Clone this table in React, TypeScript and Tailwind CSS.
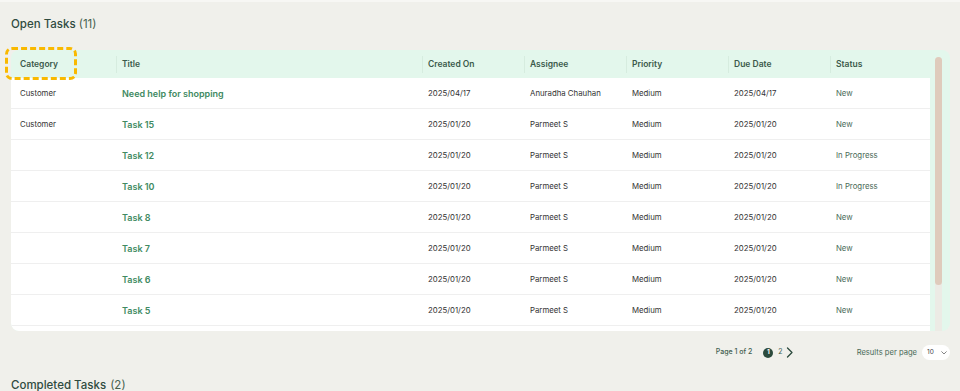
import React from "react";

const rows = [
  { cat: "Customer", title: "Need help for shopping", created: "2025/04/17", assignee: "Anuradha Chauhan", priority: "Medium", due: "2025/04/17", status: "New" },
  { cat: "Customer", title: "Task 15", created: "2025/01/20", assignee: "Parmeet S", priority: "Medium", due: "2025/01/20", status: "New" },
  { cat: "", title: "Task 12", created: "2025/01/20", assignee: "Parmeet S", priority: "Medium", due: "2025/01/20", status: "In Progress" },
  { cat: "", title: "Task 10", created: "2025/01/20", assignee: "Parmeet S", priority: "Medium", due: "2025/01/20", status: "In Progress" },
  { cat: "", title: "Task 8", created: "2025/01/20", assignee: "Parmeet S", priority: "Medium", due: "2025/01/20", status: "New" },
  { cat: "", title: "Task 7", created: "2025/01/20", assignee: "Parmeet S", priority: "Medium", due: "2025/01/20", status: "New" },
  { cat: "", title: "Task 6", created: "2025/01/20", assignee: "Parmeet S", priority: "Medium", due: "2025/01/20", status: "New" },
  { cat: "", title: "Task 5", created: "2025/01/20", assignee: "Parmeet S", priority: "Medium", due: "2025/01/20", status: "New" },
];

const grid = "grid grid-cols-[105px_306px_102px_102px_102px_102px_1fr]";

function HeadCell({ children, first, divider }: { children: React.ReactNode; first?: boolean; divider?: boolean }) {
  return (
    <div className={`relative flex items-center h-full ${first ? "pl-[9px]" : "pl-[6px]"}`}>
      {divider && <span className="absolute left-0 top-[5px] bottom-[5px] w-px bg-[#d6ecdf]" />}
      {children}
    </div>
  );
}

export default function App() {
  return (
    <div
      className="w-[960px] h-[391px] overflow-hidden bg-[#f0f0eb] border-t-2 border-[#f7f7f4] text-[#333]"
      style={{ fontFamily: "Inter, 'Noto Sans', sans-serif" }}
    >
      <div className="px-[11px]">
        <h2 className="h-[46px] flex items-center pb-[1px] text-[11.5px] font-medium text-[#2f4b3f] whitespace-nowrap">
          Open Tasks <span className="font-normal ml-[3px] text-[#46604f]">(11)</span>
        </h2>

        <div className="relative mt-[2px] w-[939px]">
          <div className="flex h-[281px] w-[939px] rounded-[8px] overflow-hidden bg-[#e3f7ec]">
            <div className="w-[919px] flex flex-col">
              <div className={`${grid} h-[28px] shrink-0 text-[8.5px] font-semibold text-[#3b5a4b] pt-[1px]`}>
                <HeadCell first>Category</HeadCell>
                <HeadCell divider>Title</HeadCell>
                <HeadCell divider>Created On</HeadCell>
                <HeadCell divider>Assignee</HeadCell>
                <HeadCell divider>Priority</HeadCell>
                <HeadCell divider>Due Date</HeadCell>
                <HeadCell divider>Status</HeadCell>
              </div>
              <div className="flex-1 overflow-hidden bg-white rounded-bl-[6px]">
                {rows.map((r, i) => (
                  <div key={i} className={`${grid} h-[31px] border-b border-[#efefef] items-center pt-[1px] text-[7.8px] text-[#333] whitespace-nowrap`}>
                    <div className="pl-[9px]">{r.cat}</div>
                    <div className="pl-[6px] text-[9px] font-semibold text-[#3f8a62]">{r.title}</div>
                    <div className="pl-[6px]">{r.created}</div>
                    <div className="pl-[6px]">{r.assignee}</div>
                    <div className="pl-[6px]">{r.priority}</div>
                    <div className="pl-[6px]">{r.due}</div>
                    <div className="pl-[6px] text-[#4b6b59]">{r.status}</div>
                  </div>
                ))}
              </div>
            </div>
            <div className="w-[20px] pt-[7px] pl-[5px]">
              <div className="w-[7px] h-full rounded-t-full bg-[#ecebe5]">
                <div className="w-[7px] h-[228px] rounded-full bg-[#dfcbbc]" />
              </div>
            </div>
          </div>

          <div className="pointer-events-none absolute left-[-6px] top-[-3px] w-[72px] h-[33px] rounded-[7px] border-[3px] border-dashed border-[#f9b900]" />
        </div>

        <div className="flex items-center justify-end h-[44px] pb-[1px] whitespace-nowrap w-[939px]">
          <span className="text-[7px] font-medium text-[#3f5e4f]">Page 1 of 2</span>
          <span className="ml-[11px] w-[10px] h-[10px] rounded-full bg-[#2b4a3c] text-white text-[6.5px] font-bold flex items-center justify-center">1</span>
          <span className="ml-[5px] text-[7px] text-[#3f5e4f]">2</span>
          <svg className="ml-[3px]" width="8" height="11" viewBox="0 0 8 11" fill="none">
            <path d="M1.5 1 L6 5.5 L1.5 10" stroke="#2b4a3c" strokeWidth="1.3" strokeLinecap="round" strokeLinejoin="round" />
          </svg>
          <span className="ml-[63px] text-[7.6px] text-[#4a6a59]">Results per page</span>
          <div className="ml-[5px] w-[28px] h-[15px] rounded-full bg-white flex items-center pl-[5px] text-[6.5px] text-[#444]">
            10
            <svg className="ml-[7px]" width="6" height="4" viewBox="0 0 6 4" fill="none">
              <path d="M0.7 0.7 L3 3 L5.3 0.7" stroke="#777" strokeWidth="0.9" strokeLinecap="round" strokeLinejoin="round" />
            </svg>
          </div>
        </div>

        <h2 className="text-[11.5px] font-medium text-[#2f4b3f] leading-[16px] mt-[2px] whitespace-nowrap">
          Completed Tasks <span className="font-normal ml-[1px] text-[#46604f]">(2)</span>
        </h2>
      </div>
    </div>
  );
}
